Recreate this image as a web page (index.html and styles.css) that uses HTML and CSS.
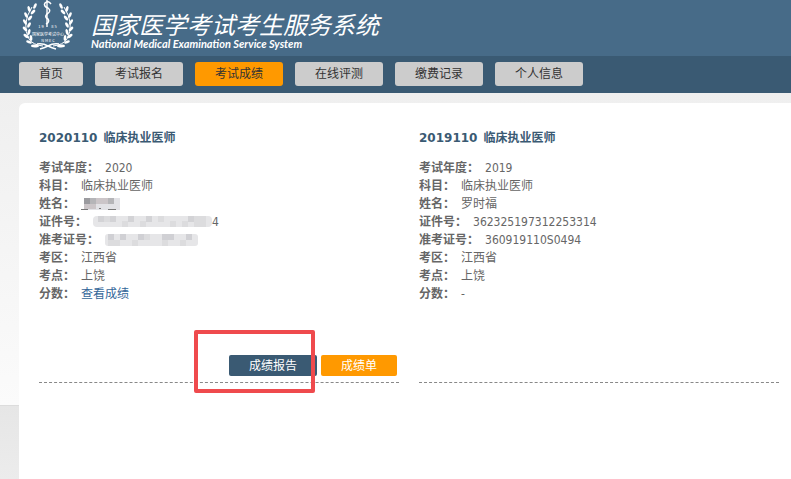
FILE: index.html
```html
<!DOCTYPE html>
<html lang="zh-CN">
<head>
    <meta charset="UTF-8">
    <meta name="viewport" content="width=device-width, initial-scale=1.0">
    <title>国家医学考试考生服务系统</title>
    <link rel="stylesheet" href="styles.css">
</head>
<body>

    <header class="header">
        <svg class="logo" viewBox="0 0 50 51" width="50" height="51" aria-hidden="true">
            <defs>
                <!-- left half of the wreath, mirrored below -->
                <g id="branch">
                    <path d="M9 7Q-2 24 6 39Q10 45 20 46" fill="none" stroke="#fff" stroke-width="1"/>
                    <g fill="#fff">
                        <ellipse cx="12" cy="6" rx="1.4" ry="3" transform="rotate(25 12 6)"/>
                        <ellipse cx="6" cy="9" rx="1.4" ry="3" transform="rotate(-15 6 9)"/>
                        <ellipse cx="10" cy="12" rx="1.4" ry="3" transform="rotate(45 10 12)"/>
                        <ellipse cx="3" cy="15" rx="1.4" ry="3" transform="rotate(-25 3 15)"/>
                        <ellipse cx="7" cy="18" rx="1.4" ry="3" transform="rotate(40 7 18)"/>
                        <ellipse cx="2" cy="22" rx="1.4" ry="3" transform="rotate(-35 2 22)"/>
                        <ellipse cx="6" cy="25" rx="1.4" ry="3" transform="rotate(30 6 25)"/>
                        <ellipse cx="2" cy="29" rx="1.4" ry="3" transform="rotate(-45 2 29)"/>
                        <ellipse cx="6" cy="32" rx="1.4" ry="3" transform="rotate(15 6 32)"/>
                        <ellipse cx="3" cy="36" rx="1.4" ry="3" transform="rotate(-55 3 36)"/>
                        <ellipse cx="8" cy="38" rx="1.4" ry="3" transform="rotate(-5 8 38)"/>
                        <ellipse cx="6" cy="42" rx="1.4" ry="3" transform="rotate(-70 6 42)"/>
                        <ellipse cx="12" cy="46" rx="1.4" ry="4" transform="rotate(-85 12 46)"/>
                    </g>
                    <path d="M14 44Q20 43 25 46Q29 48 33 49" fill="none" stroke="#fff" stroke-width="1.5"/>
                </g>
            </defs>
            <use href="#branch"/>
            <use href="#branch" transform="translate(50 0) scale(-1 1)"/>
            <path d="M24 0V27" stroke="#fff" stroke-width="1.4"/>
            <path d="M28 4Q25 0 22 3Q20 6 25 8Q29 11 24 14Q21 17 25 19Q27 22 23 24" fill="none" stroke="#fff" stroke-width="1.5"/>
            <text class="logo-text" x="18" y="28" text-anchor="middle">1 9</text>
            <text class="logo-text" x="31" y="28" text-anchor="middle">8 5</text>
            <text class="logo-text" x="25" y="36" text-anchor="middle">国家医学考试中心</text>
            <text class="logo-text" x="25" y="42" text-anchor="middle">N M E C</text>
        </svg>
        <div class="brand">
            <h1 class="brand-name">国家医学考试考生服务系统</h1>
            <p class="brand-en">National Medical Examination Service System</p>
        </div>
    </header>

    <nav class="nav">
        <a class="nav-link" href="#">首页</a>
        <a class="nav-link" href="#">考试报名</a>
        <a class="nav-link active" href="#">考试成绩</a>
        <a class="nav-link" href="#">在线评测</a>
        <a class="nav-link" href="#">缴费记录</a>
        <a class="nav-link" href="#">个人信息</a>
    </nav>

    <main class="content">
        <section class="record">
            <h2 class="record-title"><span>2020110</span><span>临床执业医师</span></h2>
            <dl class="record-info">
                <div><dt>考试年度：</dt><dd>2020</dd></div>
                <div><dt>科目：</dt><dd>临床执业医师</dd></div>
                <div>
                    <dt>姓名：</dt>
                    <dd>
                        <svg class="mosaic" viewBox="0 0 40 14" width="40" height="14">
                            <path fill="#e2e2e6" d="M3 0h36v12H3z"/>
                            <path fill="#9b9b9f" d="M3 0h6v6H3z"/>
                            <path fill="#b5b5b8" d="M9 0h6v6H9zM27 0h6v6h-6z"/>
                            <path fill="#cbc5c8" d="M15 0h12v6H15zM3 6h12v5H3z"/>
                            <path fill="#777" d="M0 11h7v1H0zM18 10h2v1h-2zM27 11h8v1h-8z"/>
                        </svg>
                    </dd>
                </div>
                <div>
                    <dt>证件号：</dt>
                    <dd class="masked">
                        <svg class="mosaic" viewBox="0 0 119 14" width="119" height="14">
                            <rect width="119" height="11" rx="4" fill="#e6e6e8"/>
                            <path fill="#d3d3d6" d="M5 0h6v6H5zM17 0h6v6h-6zM35 0h6v6h-6zM53 0h6v6h-6zM95 0h6v6h-6z"/>
                            <path fill="#dcdcde" d="M11 0h6v6h-6zM29 5h6v6h-6zM47 5h6v6h-6zM65 0h6v6h-6zM77 5h6v6h-6zM89 5h6v6h-6zM101 0h12v11h-12z"/>
                        </svg><span>4</span>
                    </dd>
                </div>
                <div>
                    <dt>准考证号：</dt>
                    <dd>
                        <svg class="mosaic" viewBox="0 0 93 14" width="93" height="14">
                            <rect width="93" height="12" rx="3" fill="#e6e6e8"/>
                            <path fill="#d0d0d4" d="M3 0h6v6H3zM15 0h6v6h-6zM33 0h6v6h-6zM57 0h12v6H57zM81 0h6v6h-6z"/>
                            <path fill="#dcdcde" d="M3 6h12v6H3zM27 6h6v6h-6zM39 0h6v6h-6zM57 6h6v6h-6zM75 6h6v6h-6z"/>
                        </svg>
                    </dd>
                </div>
                <div><dt>考区：</dt><dd>江西省</dd></div>
                <div><dt>考点：</dt><dd>上饶</dd></div>
                <div><dt>分数：</dt><dd><a class="score-link" href="#">查看成绩</a></dd></div>
            </dl>
            <div class="record-actions">
                <div class="marked">
                    <button type="button" class="btn btn-report">成绩报告</button>
                </div>
                <button type="button" class="btn btn-score">成绩单</button>
            </div>
        </section>

        <section class="record">
            <h2 class="record-title"><span>2019110</span><span>临床执业医师</span></h2>
            <dl class="record-info">
                <div><dt>考试年度：</dt><dd>2019</dd></div>
                <div><dt>科目：</dt><dd>临床执业医师</dd></div>
                <div><dt>姓名：</dt><dd>罗时福</dd></div>
                <div><dt>证件号：</dt><dd>362325197312253314</dd></div>
                <div><dt>准考证号：</dt><dd>360919110S0494</dd></div>
                <div><dt>考区：</dt><dd>江西省</dd></div>
                <div><dt>考点：</dt><dd>上饶</dd></div>
                <div><dt>分数：</dt><dd>-</dd></div>
            </dl>
            <div class="record-actions"></div>
        </section>
    </main>

</body>
</html>
```

FILE: styles.css
```css
:root {
    --header-color: #476b88;
    --nav-color: #3a5a73;
    --accent-color: #ff9900;
    --text-color: #666;
    --mark-color: #ef4a4d;
}

* { margin: 0; padding: 0; box-sizing: border-box; }

body {
    display: flex;
    flex-direction: column;
    min-height: 100vh;
    font-family: "DejaVu Sans Condensed", "Noto Sans CJK SC", sans-serif;
    font-size: 12px;
    line-height: 18px;
    color: var(--text-color);
    background: linear-gradient(#efefef 93px, #fbfbfb 405px, #dcdcdc 405px, #dcdcdc 406px, #e6e6e6 406px, #ececec 479px);
}

.header {
    display: flex;
    gap: 18px;
    height: 56px;
    padding-left: 23px;
    background: var(--header-color);
    color: #fff;
}
.logo { overflow: visible; }
.logo-text {
    font-family: "Noto Sans CJK SC", sans-serif;
    font-size: 4px;
    fill: #fff;
}
.brand { padding-top: 9px; }
.brand-name {
    font-family: "Noto Sans CJK SC", sans-serif;
    font-size: 24px;
    line-height: 29px;
    font-weight: 400;
    font-style: italic;
}
.brand-en {
    font-family: Lato, sans-serif;
    font-size: 11px;
    line-height: 12px;
    font-weight: 700;
    font-style: italic;
}

.nav {
    display: flex;
    gap: 12px;
    padding: 6px 19px 7px;
    background: var(--nav-color);
}
.nav-link {
    padding: 0 20px;
    line-height: 24px;
    border-radius: 3px;
    background: #ccc;
    color: #333;
    text-decoration: none;
}
.nav-link.active { background: var(--accent-color); }

.content {
    flex-grow: 1;
    display: flex;
    align-items: flex-start;
    gap: 20px;
    margin: 10px 0 0 19px;
    padding: 26px 12px 26px 20px;
    border-top-left-radius: 6px;
    background: #fff;
}

.record {
    flex: 1;
    border-bottom: 1px dashed #888;
}
.record-title {
    display: flex;
    gap: 6px;
    margin-bottom: 12px;
    font-size: 12px;
    line-height: 18px;
    color: var(--nav-color);
}
.record-title span:first-child { font-family: "DejaVu Sans", sans-serif; }
.record-info > div { display: flex; height: 18px; }
.record-info dt { font-weight: 700; margin-right: 6px; }
.mosaic { display: block; margin-top: 3px; }
.masked { display: flex; }
.score-link { color: #336699; text-decoration: none; }

.record-actions {
    display: flex;
    justify-content: flex-end;
    align-items: flex-start;
    gap: 4px;
    height: 79px;
    padding: 52px 2px 0 0;
}
.btn {
    display: block;
    height: 21px;
    padding: 0 20px;
    border: none;
    border-radius: 2px;
    font: inherit;
    color: #fff;
    cursor: pointer;
}
.btn-report { background: var(--nav-color); }
.btn-score { background: var(--accent-color); }

/* red frame drawn over the report button */
.marked { position: relative; }
.marked::after {
    content: "";
    position: absolute;
    inset: -25px 2px -17px -35px;
    border: 4px solid var(--mark-color);
    border-radius: 2px;
    pointer-events: none;
}
```
